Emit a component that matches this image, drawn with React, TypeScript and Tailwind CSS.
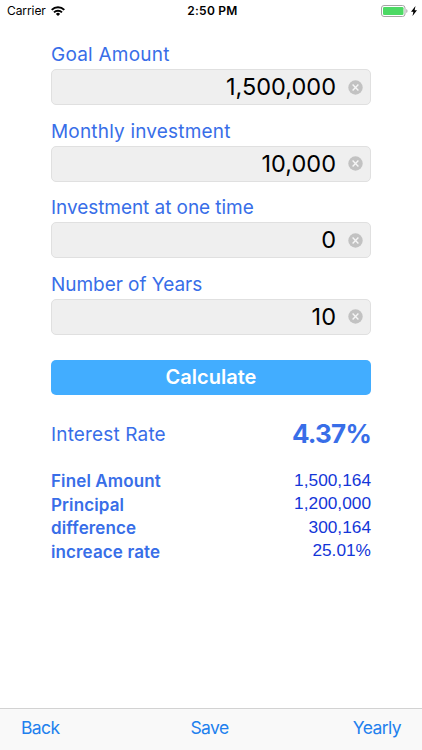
import React, { useState } from 'react';

type Field = { id: string; label: string; value: string; labelClass: string };

const FIELDS: Field[] = [
  { id: 'goal', label: 'Goal Amount', value: '1,500,000', labelClass: 'tracking-[0.22px]' },
  { id: 'monthly', label: 'Monthly investment', value: '10,000', labelClass: 'tracking-[0.18px]' },
  { id: 'lump', label: 'Investment at one time', value: '0', labelClass: 'tracking-[-0.06px]' },
  { id: 'years', label: 'Number of Years', value: '10', labelClass: 'tracking-[-0.04px]' },
];

const RESULTS = [
  { label: 'Finel Amount', value: '1,500,164' },
  { label: 'Principal', value: '1,200,000' },
  { label: 'difference', value: '300,164' },
  { label: 'increace rate', value: '25.01%' },
];

const StatusBar: React.FC = () => (
  <header className="grid h-[22px] grid-cols-3 items-center pl-[7px] pr-[5px] text-black">
    <div className="flex items-center gap-[5px] text-[12px]">
      <span className="tracking-[-0.08px]">Carrier</span>
      <svg width="14" height="10" viewBox="0 0 14 10" fill="none" stroke="currentColor" strokeWidth="2">
        <path d="M.7 3.9a8.9 8.9 0 0 1 12.6 0" />
        <path d="M3 6.4a5.7 5.7 0 0 1 8 0" />
        <path d="M7 10 4.9 7.9a3 3 0 0 1 4.2 0Z" fill="currentColor" stroke="none" />
      </svg>
    </div>
    <span className="pl-px text-center text-[12px] font-semibold tracking-[0.25px]">2:50 PM</span>
    <div className="flex items-center justify-end gap-[3px]">
      <svg width="27" height="12" viewBox="0 0 27 12">
        <rect x="0.5" y="0.5" width="23.5" height="11" rx="2.5" fill="none" stroke="#a5a5a5" />
        <rect x="2" y="2" width="20.5" height="8" rx="1.3" fill="#4cd964" />
        <path d="M25.3 4v4c1.6-.6 1.6-3.4 0-4Z" fill="#a5a5a5" />
      </svg>
      <svg width="6" height="10" viewBox="0 0 6 10">
        <path d="M4.5 0 0 5.8h2.4L1.5 10 6 4.2H3.6Z" fill="currentColor" />
      </svg>
    </div>
  </header>
);

const App: React.FC = () => {
  const [fields, setFields] = useState(FIELDS);

  const update = (id: string, value: string) => {
    setFields(prev => prev.map(f => (f.id === id ? { ...f, value } : f)));
  };

  return (
    <div className="flex h-screen flex-col bg-white font-['Inter',sans-serif] text-[#386ee8]">
      <StatusBar />

      <main className="grow px-[51px] pt-[19px]">
        {/* Inputs */}
        {fields.map(field => (
          <div key={field.id} className="mb-[12.5px]">
            <label htmlFor={field.id} className={`block h-7 text-[19px] leading-7 ${field.labelClass}`}>
              {field.label}
            </label>
            <div className="flex h-9 items-center rounded-[5px] border border-[#e0e0e0] bg-[#efefef] pr-[7px]">
              <input
                id={field.id}
                value={field.value}
                onChange={e => update(field.id, e.target.value)}
                className="w-full min-w-0 grow bg-transparent pr-3 text-right text-[23.5px] text-black outline-none"
              />
              <button onClick={() => update(field.id, '')} aria-label="Clear" className="shrink-0">
                <svg width="15" height="15" viewBox="0 0 15 15">
                  <circle cx="7.5" cy="7.5" r="7.2" fill="#c2c2c2" />
                  <path d="m4.6 4.6 5.8 5.8m0-5.8-5.8 5.8" stroke="#f6f6f6" strokeWidth="1.4" />
                </svg>
              </button>
            </div>
          </div>
        ))}

        <button className="mt-[25px] block h-[35.5px] w-full rounded-[5px] bg-[#42adff] text-[20px] font-semibold text-white">
          Calculate
        </button>

        {/* Results */}
        <div className="mt-[21px] flex h-9 items-center justify-between">
          <span className="pt-0.5 text-[19px] tracking-[0.15px]">Interest Rate</span>
          <span className="pb-px text-[26px] font-bold tracking-[-0.8px]">4.37%</span>
        </div>
        <dl className="mt-[17px]">
          {RESULTS.map(row => (
            <div key={row.label} className="flex h-[23.5px] items-center justify-between">
              <dt className="pt-[2px] text-[17px] font-semibold tracking-[0.12px]">{row.label}</dt>
              <dd className="pb-[2px] font-['Liberation_Sans',sans-serif] text-[17.3px] leading-5 text-[#1336d8]">{row.value}</dd>
            </div>
          ))}
        </dl>
      </main>

      <nav className="flex h-[42px] items-center justify-between border-t border-[#d2d2d2] bg-[#f9f9f9] pb-[3px] pl-[21px] pr-[21px] text-[17.5px] tracking-[-0.6px] text-[#2180ee]">
        <button className="flex-1 text-left">Back</button>
        <button className="flex-1 pr-[3px] text-center">Save</button>
        <button className="flex-1 text-right">Yearly</button>
      </nav>
    </div>
  );
};

export default App;
